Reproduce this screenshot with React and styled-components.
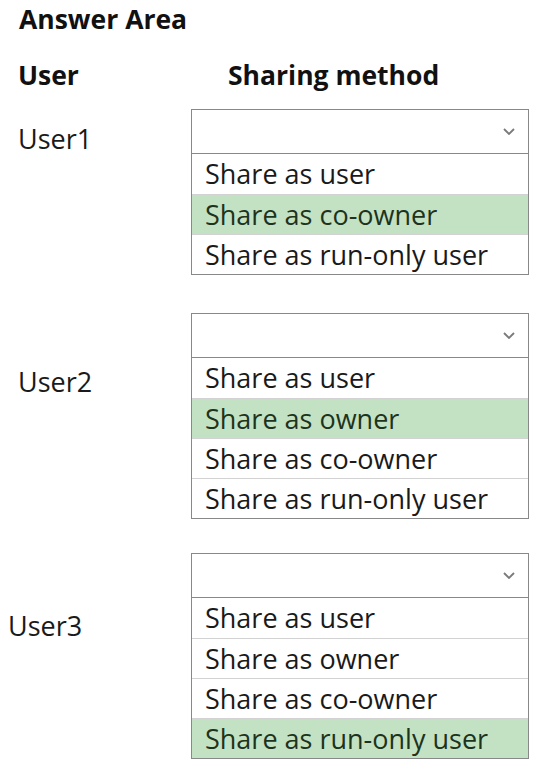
import React from "react";
import styled, { createGlobalStyle } from "styled-components";

const GlobalStyle = createGlobalStyle`
  body {
    margin: 0;
    background: #ffffff;
    font-family: "Open Sans", "Noto Sans", sans-serif;
    color: #1a1a1a;
  }
`;

const questions = [
  {
    user: "User1",
    indent: 18,
    labelTop: 10,
    gap: 19,
    options: ["Share as user", "Share as co-owner", "Share as run-only user"],
    selected: 1,
  },
  {
    user: "User2",
    indent: 18,
    labelTop: 49,
    gap: 38,
    options: [
      "Share as user",
      "Share as owner",
      "Share as co-owner",
      "Share as run-only user",
    ],
    selected: 1,
  },
  {
    user: "User3",
    indent: 8,
    labelTop: 53,
    gap: 34,
    options: [
      "Share as user",
      "Share as owner",
      "Share as co-owner",
      "Share as run-only user",
    ],
    selected: 3,
  },
];

const Chevron = () => (
  <svg width="12" height="7" viewBox="0 0 12 7">
    <polyline
      points="1,1 6,6 11,1"
      fill="none"
      stroke="#7a7a7a"
      strokeWidth="1.8"
    />
  </svg>
);

const App = () => {
  return (
    <Page>
      <GlobalStyle />
      <Title>Answer Area</Title>
      <HeaderRow>
        <HeaderCell $indent={18}>User</HeaderCell>
        <HeaderCell $indent={37}>Sharing method</HeaderCell>
      </HeaderRow>
      {questions.map((q) => (
        <QuestionRow key={q.user} $gap={q.gap}>
          <UserLabel $indent={q.indent} $top={q.labelTop}>
            {q.user}
          </UserLabel>
          <Dropdown>
            <SelectBox>
              <Chevron />
            </SelectBox>
            <OptionList>
              {q.options.map((opt, i) => (
                <Option key={opt} $selected={i === q.selected}>
                  {opt}
                </Option>
              ))}
            </OptionList>
          </Dropdown>
        </QuestionRow>
      ))}
    </Page>
  );
};

export default App;

const Page = styled.div`
  width: 542px;
  padding-top: 4px;
`;
const Title = styled.h1`
  margin: 0;
  padding-left: 19px;
  font-size: 26.5px;
  line-height: 30px;
  font-weight: 700;
  color: #111;
`;
const HeaderRow = styled.div`
  display: grid;
  grid-template-columns: 191px 338px;
  margin-top: 26px;
`;
const HeaderCell = styled.div`
  padding-left: ${(p) => p.$indent}px;
  font-size: 26.5px;
  line-height: 30px;
  font-weight: 700;
  color: #111;
`;
const QuestionRow = styled.div`
  display: grid;
  grid-template-columns: 191px 338px;
  align-items: start;
  margin-top: ${(p) => p.$gap}px;
`;
const UserLabel = styled.div`
  padding-left: ${(p) => p.$indent}px;
  margin-top: ${(p) => p.$top}px;
  font-size: 27px;
  line-height: 40px;
  color: #1a1a1a;
`;
const Dropdown = styled.div`
  display: flex;
  flex-direction: column;
`;
const SelectBox = styled.div`
  height: 45px;
  box-sizing: border-box;
  border: 1px solid #888888;
  display: flex;
  align-items: center;
  justify-content: flex-end;
  padding-right: 13px;
  background: #fff;
`;
const OptionList = styled.div`
  border: 1px solid #888888;
  border-top: none;
`;
const Option = styled.div`
  height: 40px;
  box-sizing: border-box;
  padding-left: 13px;
  font-size: 27px;
  line-height: 40px;
  white-space: nowrap;
  background: ${(p) => (p.$selected ? "#c3e2c3" : "#ffffff")};
  color: ${(p) => (p.$selected ? "#1d331d" : "#1a1a1a")};
  & + & {
    border-top: 1px solid #d2d2d2;
    line-height: 39px;
  }
`;
